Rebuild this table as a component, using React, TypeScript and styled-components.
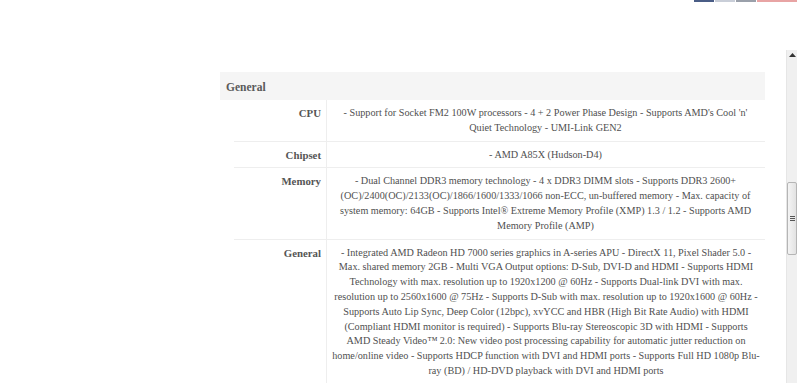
import React from "react";
import styled, { createGlobalStyle } from "styled-components";

const GlobalStyle = createGlobalStyle`
  html, body {
    margin: 0;
    padding: 0;
    background: #fff;
  }
  body {
    font-family: "Liberation Serif", "Times New Roman", serif;
    color: #555;
    overflow: hidden;
  }
`;

type Spec = { label: string; value: string; wide?: boolean };

const specs: Spec[] = [
  {
    label: "CPU",
    value:
      "- Support for Socket FM2 100W processors - 4 + 2 Power Phase Design - Supports AMD's Cool 'n' Quiet Technology - UMI-Link GEN2",
  },
  { label: "Chipset", value: "- AMD A85X (Hudson-D4)" },
  {
    label: "Memory",
    value:
      "- Dual Channel DDR3 memory technology - 4 x DDR3 DIMM slots - Supports DDR3 2600+ (OC)/2400(OC)/2133(OC)/1866/1600/1333/1066 non-ECC, un-buffered memory - Max. capacity of system memory: 64GB - Supports Intel® Extreme Memory Profile (XMP) 1.3 / 1.2 - Supports AMD Memory Profile (AMP)",
  },
  {
    label: "General",
    wide: true,
    value:
      "- Integrated AMD Radeon HD 7000 series graphics in A-series APU - DirectX 11, Pixel Shader 5.0 - Max. shared memory 2GB - Multi VGA Output options: D-Sub, DVI-D and HDMI - Supports HDMI Technology with max. resolution up to 1920x1200 @ 60Hz - Supports Dual-link DVI with max. resolution up to 2560x1600 @ 75Hz - Supports D-Sub with max. resolution up to 1920x1600 @ 60Hz - Supports Auto Lip Sync, Deep Color (12bpc), xvYCC and HBR (High Bit Rate Audio) with HDMI (Compliant HDMI monitor is required) - Supports Blu-ray Stereoscopic 3D with HDMI - Supports AMD Steady Video™ 2.0: New video post processing capability for automatic jutter reduction on home/online video - Supports HDCP function with DVI and HDMI ports - Supports Full HD 1080p Blu-ray (BD) / HD-DVD playback with DVI and HDMI ports",
  },
];

const App: React.FC = () => {
  return (
    <>
      <GlobalStyle />
      <Page>
        <ChromeStrip>
          <ChromeTab $color="#4a5d86" />
          <ChromeTab $color="#c9ced8" />
          <ChromeTab $color="#9aa0aa" />
          <ChromeTab $color="#e8a4a4" $grow />
        </ChromeStrip>
        <SpecTable>
          <SpecHeader>General</SpecHeader>
          <SpecBody>
            {specs.map((s) => (
              <SpecRow key={s.label}>
                <SpecLabel>{s.label}</SpecLabel>
                <SpecValue $wide={s.wide}>{s.value}</SpecValue>
              </SpecRow>
            ))}
          </SpecBody>
        </SpecTable>
      </Page>
      <Scrollbar>
        <ScrollArrow>
          <svg width="7" height="4" viewBox="0 0 7 4">
            <path d="M0 4 L3.5 0 L7 4 Z" fill="#333" />
          </svg>
        </ScrollArrow>
        <ScrollThumb>
          <Grip />
          <Grip />
          <Grip />
        </ScrollThumb>
      </Scrollbar>
    </>
  );
};

export default App;

const Page = styled.div`
  width: 797px;
  height: 383px;
  box-sizing: border-box;
  overflow: hidden;
  padding-right: 32px;
`;

const ChromeStrip = styled.div`
  display: flex;
  justify-content: flex-end;
  height: 2px;
  margin-right: -32px;
`;

const ChromeTab = styled.div<{ $color: string; $grow?: boolean }>`
  width: ${(p) => (p.$grow ? "40px" : "20px")};
  background: ${(p) => p.$color};
  margin-left: 1px;
`;

const SpecTable = styled.div`
  margin: 70px 0 0 220px;
  width: 545px;
  font-size: 10.2px;
  line-height: 14.8px;
`;

const SpecHeader = styled.div`
  height: 28px;
  line-height: 30px;
  padding-left: 6px;
  background: #f5f5f5;
  font-weight: bold;
  font-size: 11.5px;
  color: #5a5a5a;
`;

const SpecBody = styled.div`
  margin-left: 14px;
`;

const SpecRow = styled.div`
  display: grid;
  grid-template-columns: 93px 1fr;
  border-bottom: 1px solid #eee;
`;

const SpecLabel = styled.div`
  text-align: right;
  font-weight: bold;
  font-size: 10.8px;
  padding: 6px 5px 5px 0;
  border-right: 1px solid #eee;
`;

const SpecValue = styled.div<{ $wide?: boolean }>`
  text-align: center;
  color: #4f4f4f;
  padding: ${(p) => (p.$wide ? "6px 5px 5px 5px" : "6px 6px 5px 5px")};
`;

const Scrollbar = styled.div`
  position: fixed;
  top: 50px;
  right: 0;
  width: 10px;
  bottom: 0;
  background: #f0f0f0;
  border-left: 1px solid #e6e6e6;
`;

const ScrollArrow = styled.div`
  display: flex;
  justify-content: center;
  padding-top: 3px;
  height: 10px;
`;

const ScrollThumb = styled.div`
  position: absolute;
  top: 132px;
  left: 0;
  right: 0;
  height: 73px;
  box-sizing: border-box;
  border: 1px solid #b5b5b5;
  border-radius: 2px;
  background: linear-gradient(to right, #f4f4f4, #e2e2e2);
  display: flex;
  flex-direction: column;
  align-items: center;
  justify-content: center;
  gap: 1px;
`;

const Grip = styled.div`
  width: 5px;
  height: 1px;
  background: #555;
`;
